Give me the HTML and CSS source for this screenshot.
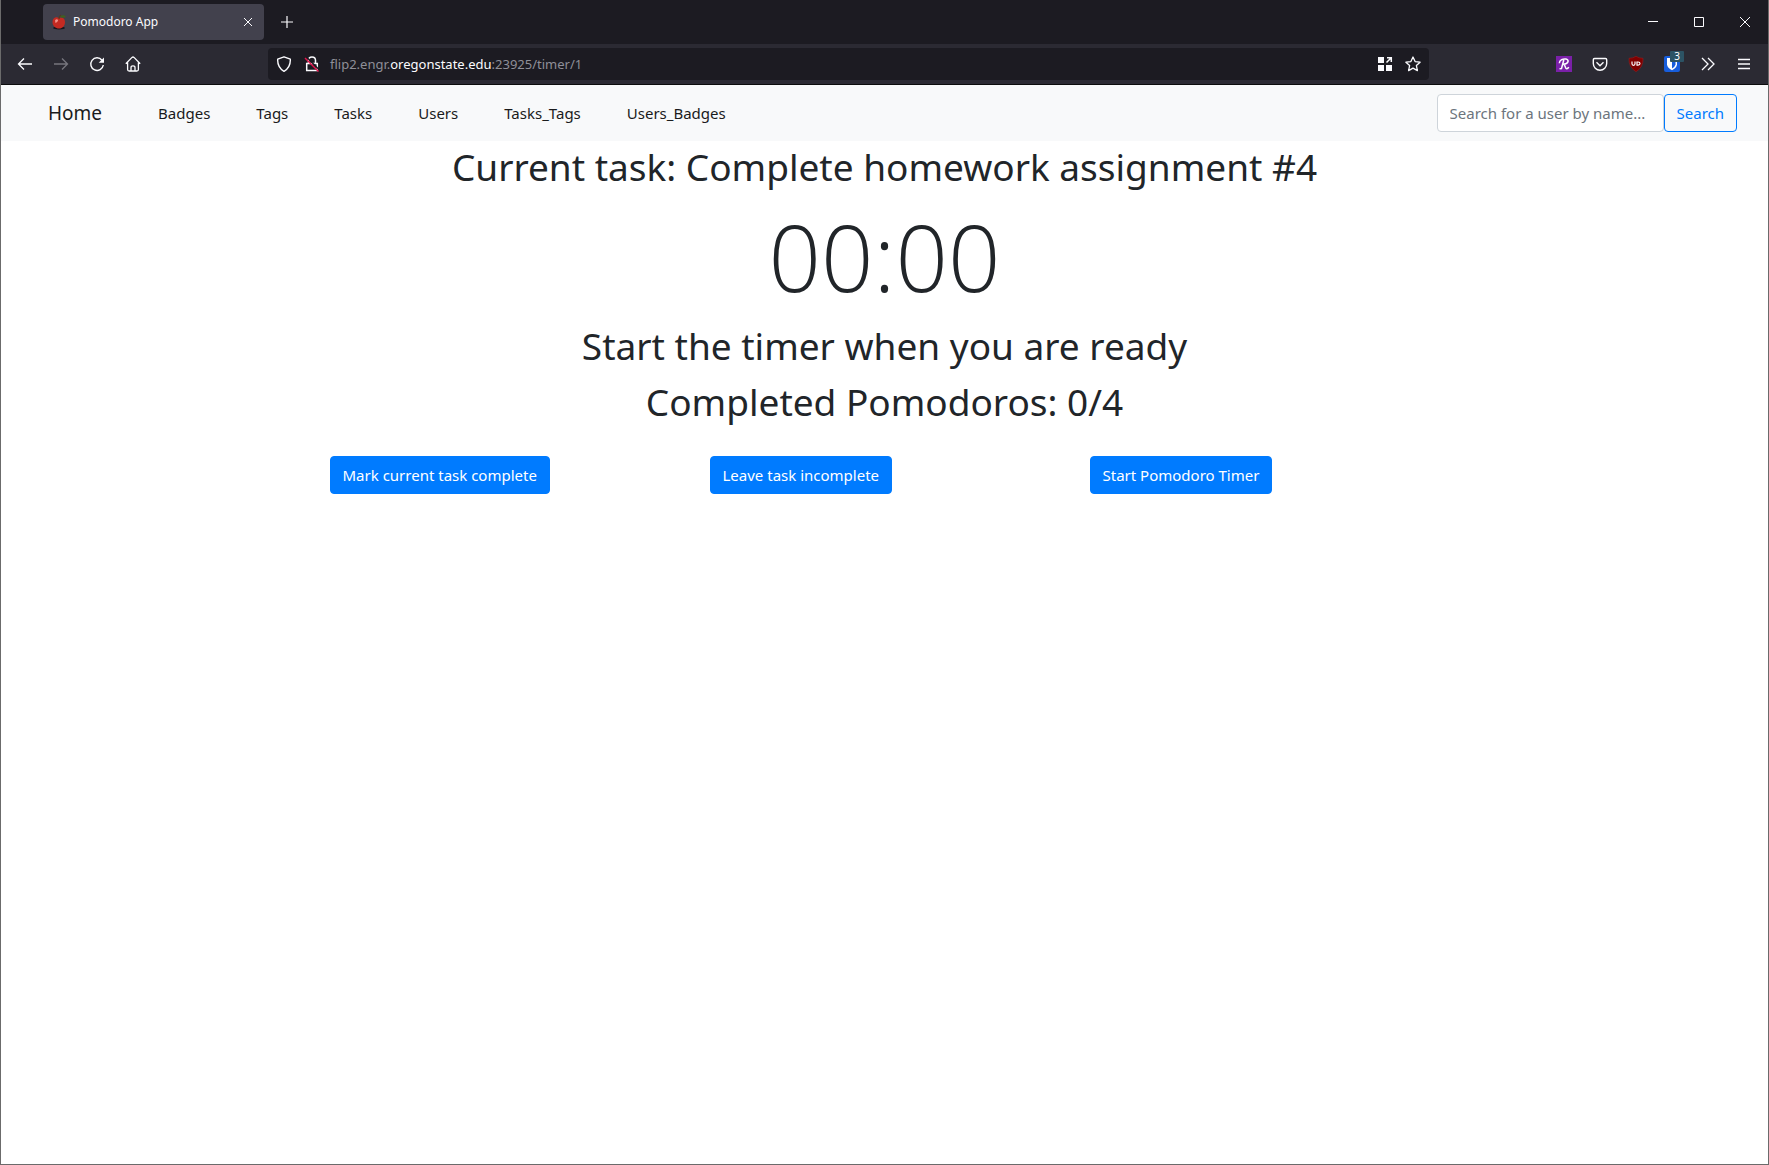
FILE: index.html
```html
<!DOCTYPE html>
<html lang="en">
<head>
<meta charset="utf-8">
<title>Pomodoro App</title>
<link rel="stylesheet" href="styles.css">
</head>
<body>
<div class="window">
  <header class="chrome">
    <div class="tabbar">
      <div class="tab">
        <svg class="favicon" width="16" height="16" viewBox="0 0 16 16"><ellipse cx="8" cy="14" rx="6" ry="1.4" fill="#16151b"/><path d="M8 4C5 2 1.500 4 1.500 8S4.500 14.500 8 14.500 14 12 14 8 11 2.500 8 4z" fill="#c42a22"/><path d="M4 6.500C5 5 6.500 5 7 6S5.500 8.500 4.500 9z" fill="#f2948a"/><path d="M8 5C8 3 9 1.500 10 1" stroke="#5a3a1c" stroke-width="1.200" fill="none"/><path d="M9 2.500C11 .5 13.500 1 15 2.500 13 4.500 10.500 4 9 2.500z" fill="#3f5f22"/></svg>
        <span class="tab-title">Pomodoro App</span>
        <button class="icon-btn tab-close" aria-label="Close tab"><svg width="10" height="10" viewBox="0 0 10 10"><path d="M1 1l8 8M9 1l-8 8"/></svg></button>
      </div>
      <button class="icon-btn new-tab" aria-label="New tab"><svg width="14" height="14" viewBox="0 0 14 14"><path d="M7 1v12M1 7h12" stroke-width="1.200"/></svg></button>
      <div class="window-controls">
        <button class="icon-btn" aria-label="Minimize"><svg width="10" height="10" viewBox="0 0 10 10"><path d="M0 4.500h10"/></svg></button>
        <button class="icon-btn" aria-label="Maximize"><svg width="10" height="10" viewBox="0 0 10 10"><path d="M.5 .5h9v9h-9z"/></svg></button>
        <button class="icon-btn" aria-label="Close"><svg width="10" height="10" viewBox="0 0 10 10"><path d="M0 0l10 10M10 0L0 10"/></svg></button>
      </div>
    </div>
    <div class="toolbar">
      <button class="icon-btn tool" aria-label="Back"><svg width="16" height="16" viewBox="0 0 16 16"><path d="M15 8H1.500M7 2.500L1.500 8 7 13.500" stroke-width="1.300"/></svg></button>
      <button class="icon-btn tool dim" aria-label="Forward"><svg width="16" height="16" viewBox="0 0 16 16"><path d="M1 8h13.500M9 2.500L14.500 8 9 13.500" stroke-width="1.300"/></svg></button>
      <button class="icon-btn tool" aria-label="Reload"><svg width="16" height="16" viewBox="0 0 16 16"><path d="M13 4.200A6.300 6.300 0 1 0 14.300 9" stroke-width="1.400"/><path d="M15 1.500v5.300H9.700z" fill="#fbfbfe" stroke="none"/></svg></button>
      <button class="icon-btn tool" aria-label="Home"><svg width="16" height="16" viewBox="0 0 16 16"><path d="M.8 7.800L7 1.400q1-.9 2 0l6.200 6.400M2.600 6.500v7q0 1.500 1.500 1.500h7.800q1.500 0 1.500-1.500v-7M6 15v-3.500q0-1.700 2-1.700t2 1.700V15" stroke-width="1.300"/></svg></button>
      <div class="urlbar">
        <button class="icon-btn url-icon" aria-label="Tracking protection"><svg width="16" height="16" viewBox="0 0 16 16"><path d="M8 .8l6.300 2.400q.5 8-6.300 12.200Q1.200 11.200 1.700 3.200z" stroke-width="1.400" stroke-linejoin="round"/></svg></button>
        <button class="icon-btn url-icon" aria-label="Connection not secure"><svg width="16" height="16" viewBox="0 0 16 16"><path d="M4.500 7V4.500C4.500 2.500 6 1 8 1s3.500 1.500 3.500 3.500V7M2.700 7.500h10.600v7H2.700z" stroke-width="1.500"/><path d="M2.500 1l13 13" stroke="#1c1b22" stroke-width="1.500"/><path d="M1 2l13.500 13.500" stroke="#e2154d" stroke-width="1.400"/></svg></button>
        <a class="url" href="#">flip2.engr.<span class="domain">oregonstate.edu</span>:23925/timer/1</a>
        <button class="icon-btn url-icon" aria-label="Extensions grid"><svg width="16" height="16" viewBox="0 0 16 16"><path d="M1 1h6v6H1zM1 9h6v6H1zM9 9h6v6H9z" fill="#fbfbfe" stroke="none"/><path d="M9.500 6.500L14 2M10 1.700h4.300V6" stroke-width="1.500"/></svg></button>
        <button class="icon-btn url-icon" aria-label="Bookmark"><svg width="16" height="16" viewBox="0 0 16 16"><path d="M8 1l2.100 4.600 5 .6-3.700 3.400 1 5L8 12.100 3.600 14.600l1-5L.9 6.200l5-.6z" stroke-width="1.300" stroke-linejoin="round"/></svg></button>
      </div>
      <button class="icon-btn tool" aria-label="Rakuten"><svg width="16" height="16" viewBox="0 0 16 16"><path d="M0 0h16v16H0z" fill="#7a20a8" stroke="none"/><path d="M7.800 4L5.500 12.500 3.500 12.800M3.300 7.200C3.500 4 7 2.500 10 3s3.300 4.500-2.500 5.300c2 .3 1.500 4.500 3.300 4.400 1 0 1.500-.7 2-1.500" stroke-width="1.500"/></svg></button>
      <button class="icon-btn tool" aria-label="Pocket"><svg width="16" height="16" viewBox="0 0 16 16"><path d="M2.500 2.500h11q1.200 0 1.200 1.200V7.500a6.700 6.700 0 0 1-13.400 0V3.700q0-1.200 1.200-1.200zM4.500 6.300L8 9.700l3.500-3.400" stroke-width="1.400"/></svg></button>
      <button class="icon-btn tool" aria-label="uBlock Origin"><svg width="16" height="16" viewBox="0 0 16 16"><path d="M8 .3q3 2 7 2 .5 9-7 13.400Q.5 11.300 1 2.300q4 0 7-2z" fill="#800000" stroke="#a02020" stroke-width=".5"/><path d="M4 5.500v2.300q0 1.500 1.500 1.500T7 7.800V5.500M9 6h1q2 0 2 1.500T10 9.200H9z" stroke-width="1.200"/></svg></button>
      <button class="icon-btn tool" aria-label="Bitwarden, 3 items"><svg width="16" height="16" viewBox="0 0 16 16"><rect width="16" height="16" rx="2" fill="#175ddc" stroke="none"/><path d="M3 2h10v6.500q-.5 3.500-5 5.700Q3.500 12 3 8.500z" fill="#fff" stroke="none"/><path d="M8 3.500h3.500v5q-.5 2.300-3.500 3.900z" fill="#175ddc" stroke="none"/></svg><span class="count">3</span></button>
      <button class="icon-btn tool" aria-label="More tools"><svg width="16" height="16" viewBox="0 0 16 16"><path d="M2 2l6 6-6 6M8 2l6 6-6 6" stroke-width="1.300"/></svg></button>
      <button class="icon-btn tool" aria-label="Menu"><svg width="16" height="16" viewBox="0 0 16 16"><path d="M2 3.500h12M2 8h12M2 12.500h12" stroke-width="1.300"/></svg></button>
    </div>
  </header>
  <nav class="navbar">
    <a class="brand" href="#">Home</a>
    <ul class="links">
      <li><a href="#">Badges</a></li>
      <li><a href="#">Tags</a></li>
      <li><a href="#">Tasks</a></li>
      <li><a href="#">Users</a></li>
      <li><a href="#">Tasks_Tags</a></li>
      <li><a href="#">Users_Badges</a></li>
    </ul>
    <form class="search">
      <input class="search-input" type="text" placeholder="Search for a user by name..." aria-label="Search for a user by name">
      <button class="btn btn-outline" type="button">Search</button>
    </form>
  </nav>
  <main>
    <h1>Current task: Complete homework assignment #4</h1>
    <div class="timer" role="timer">00:00</div>
    <h1>Start the timer when you are ready</h1>
    <h1>Completed Pomodoros: 0/4</h1>
    <div class="actions">
      <div class="col"><button class="btn btn-primary">Mark current task complete</button></div>
      <div class="col"><button class="btn btn-primary">Leave task incomplete</button></div>
      <div class="col"><button class="btn btn-primary">Start Pomodoro Timer</button></div>
    </div>
  </main>
</div>
</body>
</html>
```
FILE: styles.css
```css
* { box-sizing: border-box; }

body {
  margin: 0;
  background: #fff;
  color: #212529;
  font: 15px/24px "Noto Sans", "Open Sans", sans-serif;
}

a { color: inherit; text-decoration: none; }
button, input { font: inherit; }

.window {
  min-height: 100vh;
  border: 1px solid #6b6b6b;
  border-top: 0;
}

/* Browser chrome */
.chrome {
  background: #2b2a33;
  border-bottom: 1px solid #0c0c0d;
  color: #fbfbfe;
}

.tabbar {
  display: flex;
  align-items: center;
  height: 44px;
  padding-left: 42px;
  background: #1c1b22;
}

.tab {
  display: flex;
  align-items: center;
  width: 221px;
  height: 36px;
  padding: 0 4px 0 8px;
  border-radius: 4px;
  background: #42414d;
  font-size: 12px;
}

.tab-title { flex: 1; margin-left: 6px; }

.icon-btn {
  display: flex;
  align-items: center;
  justify-content: center;
  padding: 0;
  border: 0;
  background: none;
  color: #fbfbfe;
}

.icon-btn svg { fill: none; stroke: currentColor; }
.tab-close { width: 24px; height: 24px; }
.new-tab { width: 46px; height: 36px; }

.window-controls { display: flex; margin-left: auto; }
.window-controls .icon-btn { width: 46px; height: 44px; }

.toolbar {
  display: flex;
  align-items: center;
  height: 40px;
  padding: 0 6px;
}

.tool { position: relative; width: 36px; height: 32px; }
.dim { color: #77767e; }

.count {
  position: absolute;
  top: 3px;
  right: 6px;
  width: 14px;
  height: 11px;
  border-radius: 1px;
  background: #2c5364;
  color: #fff;
  font-size: 10px;
  line-height: 11px;
}

.urlbar {
  display: flex;
  flex: 1;
  align-items: center;
  height: 32px;
  margin: 0 117px;
  padding: 0 2px;
  border-radius: 4px;
  background: #1c1b22;
}

.url-icon { width: 28px; height: 28px; }
.url { flex: 1; padding-left: 4px; color: #8f8f98; font-size: 13px; }
.domain { color: #fbfbfe; }

/* Site navigation */
.navbar {
  display: flex;
  align-items: center;
  min-height: 56px;
  padding: 8px 31px 8px 47px;
  background: #f8f9fa;
  color: #1a1b1c;
}

.brand { font-size: 19px; }

.links {
  display: flex;
  flex: 1;
  gap: 46px;
  margin: 0 0 0 56px;
  padding: 0;
  list-style: none;
}

.search { display: flex; }

.search-input {
  width: 227px;
  height: 38px;
  padding: 6px 12px;
  border: 1px solid #ced4da;
  border-radius: 4px;
  background: #fff;
  color: #495057;
}

.search-input::placeholder { color: #6c757d; opacity: 1; }

.btn {
  height: 38px;
  padding: 0 12px;
  border: 1px solid #007bff;
  border-radius: 4px;
  white-space: nowrap;
}

.btn-outline { background: transparent; color: #007bff; }
.btn-primary { background: #007bff; color: #fff; }

/* Timer */
main { padding-top: 2px; }

h1 {
  margin: 0 0 8px;
  font-size: 37px;
  font-weight: 400;
  line-height: 48px;
  text-align: center;
}

.timer {
  margin-bottom: 8px;
  font-family: "Open Sans", "Noto Sans", sans-serif;
  font-size: 92px;
  font-weight: 300;
  line-height: 115px;
  text-align: center;
}

.actions {
  display: grid;
  grid-template-columns: repeat(3, 1fr);
  max-width: 1140px;
  margin: 30px auto 0;
}

.col { padding: 0 15px; }
```
